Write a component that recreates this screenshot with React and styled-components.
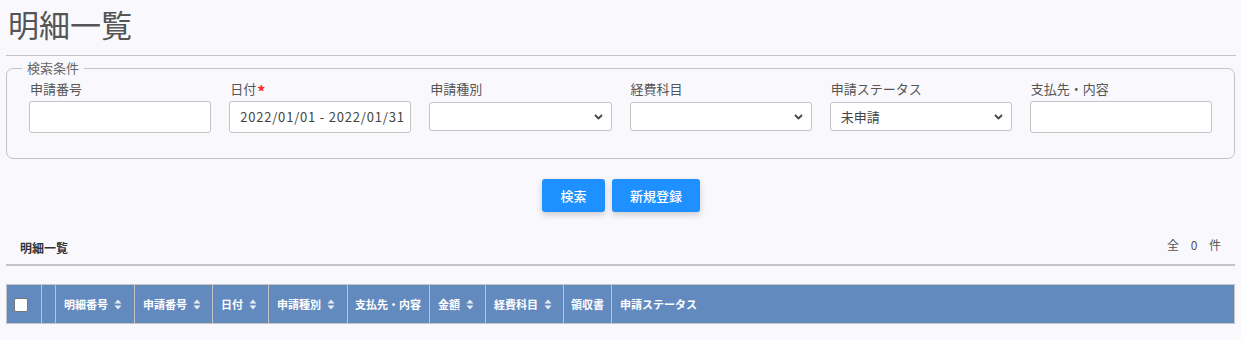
import React from 'react';
import styled, { createGlobalStyle } from 'styled-components';

const GlobalStyle = createGlobalStyle`
  body {
    margin: 0;
    background: #f9f9fd;
    font-family: "Noto Sans CJK JP", "Noto Sans", sans-serif;
    color: #555;
  }
`;

const Page = styled.div`
  padding: 0 5px 0 6px;
`;

const Title = styled.h1`
  margin: 0;
  padding: 2px 0 0 2px;
  height: 53px;
  font-size: 31px;
  font-weight: 400;
  line-height: 44px;
  color: #555;
  border-bottom: 1px solid #c4c4c4;
`;

const SearchBox = styled.fieldset`
  margin: 3px 1px 0 0;
  padding: 3px 22px 25px;
  border: 1px solid #c4c4c4;
  border-radius: 7px;
`;

const Legend = styled.legend`
  margin-left: -7px;
  padding: 0 5px;
  font-size: 13px;
  line-height: 18px;
  color: #666;
`;

const FieldGrid = styled.div`
  display: grid;
  grid-template-columns: repeat(6, minmax(0, 1fr));
  gap: 18px;
`;

const Field = styled.div`
  display: flex;
  flex-direction: column;
  gap: 3px;
  min-width: 0;
`;

const Label = styled.label`
  font-size: 13px;
  line-height: 18px;
  color: #555;
  padding-left: 1px;
`;

const Required = styled.span`
  color: #ff2a2a;
  font-size: 16px;
  font-weight: 700;
  line-height: 0;
  margin-left: 1px;
  vertical-align: -4px;
`;

const TextInput = styled.div`
  box-sizing: border-box;
  height: 32px;
  background: #fff;
  border: 1px solid #c4c4c4;
  border-radius: 3px;
  padding: 0 0 0 10px;
  font-size: 13px;
  line-height: 30px;
  letter-spacing: 0.8px;
  color: #444;
  white-space: nowrap;
  overflow: hidden;
`;

const Select = styled.div`
  box-sizing: border-box;
  height: 29px;
  margin-top: 1px;
  background: #fff;
  border: 1px solid #c4c4c4;
  border-radius: 3px;
  padding: 0 8px 0 10px;
  display: flex;
  align-items: center;
  justify-content: space-between;
  font-size: 13px;
  color: #444;
`;

const Buttons = styled.div`
  display: flex;
  justify-content: center;
  gap: 7px;
  margin-top: 20px;
`;

const Button = styled.button`
  height: 33px;
  width: ${({ $w }) => $w}px;
  border: none;
  border-radius: 3px;
  background: #1e90ff;
  color: #fff;
  font-family: inherit;
  font-size: 13px;
  font-weight: 500;
  box-shadow: 0 3px 6px rgba(0, 0, 0, 0.18);
`;

const ListHeader = styled.div`
  margin-top: 21px;
  display: flex;
  justify-content: space-between;
  align-items: center;
  padding: 0 14px 6px 14px;
  border-bottom: 2px solid #c4c4c4;
  margin-right: 1px;
`;

const ListTitle = styled.span`
  font-size: 12px;
  font-weight: 700;
  color: #333;
  line-height: 20px;
  padding-top: 5px;
`;

const Count = styled.span`
  font-size: 12px;
  color: #555;
  line-height: 18px;
  word-spacing: 9px;
  padding-bottom: 2px;
`;

const Table = styled.table`
  margin-top: 18px;
  width: calc(100% - 1px);
  border-collapse: collapse;
  table-layout: fixed;
`;

const Th = styled.th`
  height: 39px;
  padding: 0 ${({ $pad }) => ($pad ?? 8)}px;
  background: #638abf;
  border: 1px solid #c4c4c4;
  color: #fff;
  font-size: 11px;
  font-weight: 700;
  text-align: left;
  white-space: nowrap;
  overflow: hidden;
  width: ${({ $w }) => ($w ? `${$w}px` : 'auto')};
  box-sizing: border-box;
`;

const CheckCell = styled(Th)`
  padding: 0 0 0 7px;
`;

const CheckBox = styled.span`
  display: inline-block;
  width: 12px;
  height: 12px;
  background: #fff;
  border: 1px solid #777;
  border-radius: 2px;
  vertical-align: middle;
  margin-top: -2px;
`;

const HeadInner = styled.span`
  display: inline-flex;
  align-items: center;
  gap: 6px;
`;

const Chevron = () => (
  <svg width="9" height="6" viewBox="0 0 9 6">
    <path d="M1 1 L4.5 4.5 L8 1" fill="none" stroke="#444" strokeWidth="1.8" />
  </svg>
);

const SortIcon = () => (
  <svg width="8" height="11" viewBox="0 0 8 11">
    <path d="M4 0.5 L7.5 4.6 L0.5 4.6 Z M4 10.5 L7.5 6.4 L0.5 6.4 Z" fill="#e6ecf5" />
  </svg>
);

const columns = [
  { label: '明細番号', w: 79, sort: true },
  { label: '申請番号', w: 78, sort: true },
  { label: '日付', w: 56, sort: true },
  { label: '申請種別', w: 79, sort: true },
  { label: '支払先・内容', w: 82, pad: 7 },
  { label: '金額', w: 56, sort: true },
  { label: '経費科目', w: 78, sort: true },
  { label: '領収書', w: 48, pad: 7 },
  { label: '申請ステータス' },
];

export default function App() {
  return (
    <Page>
      <GlobalStyle />
      <Title>明細一覧</Title>
      <SearchBox>
        <Legend>検索条件</Legend>
        <FieldGrid>
          <Field>
            <Label>申請番号</Label>
            <TextInput />
          </Field>
          <Field>
            <Label>日付<Required>*</Required></Label>
            <TextInput>2022/01/01 - 2022/01/31</TextInput>
          </Field>
          <Field>
            <Label>申請種別</Label>
            <Select><span /><Chevron /></Select>
          </Field>
          <Field>
            <Label>経費科目</Label>
            <Select><span /><Chevron /></Select>
          </Field>
          <Field>
            <Label>申請ステータス</Label>
            <Select><span>未申請</span><Chevron /></Select>
          </Field>
          <Field>
            <Label>支払先・内容</Label>
            <TextInput />
          </Field>
        </FieldGrid>
      </SearchBox>
      <Buttons>
        <Button $w={63}>検索</Button>
        <Button $w={88}>新規登録</Button>
      </Buttons>
      <ListHeader>
        <ListTitle>明細一覧</ListTitle>
        <Count>全 0 件</Count>
      </ListHeader>
      <Table>
        <thead>
          <tr>
            <CheckCell $w={35}><CheckBox /></CheckCell>
            <Th $w={14} $pad={0} />
            {columns.map((c) => (
              <Th key={c.label} $w={c.w} $pad={c.pad}>
                <HeadInner>
                  {c.label}
                  {c.sort && <SortIcon />}
                </HeadInner>
              </Th>
            ))}
          </tr>
        </thead>
      </Table>
    </Page>
  );
}
